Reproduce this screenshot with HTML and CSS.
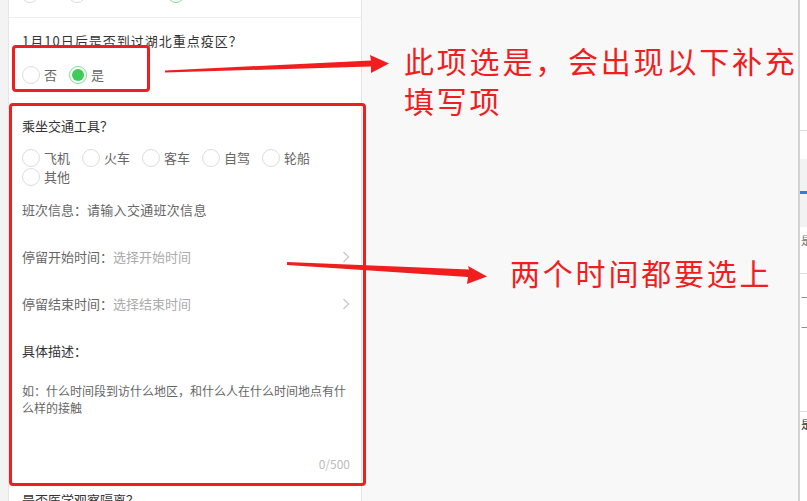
FILE: index.html
```html
<!DOCTYPE html>
<html lang="zh-CN">
<head>
    <meta charset="UTF-8">
    <meta name="viewport" content="width=device-width, initial-scale=1.0">
    <title>健康信息登记</title>
    <link rel="stylesheet" href="styles.css">
</head>
<body>
    <div class="page">
        <div class="gutter"></div>
        <div class="form">
            <div class="prev">
                <div class="radios radios-prev">
                    <span class="dot"></span>
                    <span class="dot"></span>
                    <span class="dot on"></span>
                </div>
            </div>

            <div class="section section-visit">
                <div class="q q-visit">1月10日后是否到过湖北重点疫区？</div>
                <div class="radios">
                    <label class="radio"><span class="dot"></span>否</label>
                    <label class="radio"><span class="dot on"></span>是</label>
                </div>
            </div>

            <div class="section section-travel">
                <div class="q">乘坐交通工具？</div>
                <div class="radios options">
                    <label class="radio"><span class="dot"></span>飞机</label>
                    <label class="radio"><span class="dot"></span>火车</label>
                    <label class="radio"><span class="dot"></span>客车</label>
                    <label class="radio"><span class="dot"></span>自驾</label>
                    <label class="radio"><span class="dot"></span>轮船</label>
                    <label class="radio"><span class="dot"></span>其他</label>
                </div>
                <div class="row">
                    <span class="label">班次信息：</span><span class="input">请输入交通班次信息</span>
                </div>
                <div class="row">
                    <span class="label">停留开始时间：</span><span class="hint">选择开始时间</span>
                    <svg class="chev" width="8" height="12" viewBox="0 0 8 12"><polyline points="1.5,1 6.5,6 1.5,11" fill="none" stroke="#c8c8c8" stroke-width="1.3"/></svg>
                </div>
                <div class="row">
                    <span class="label">停留结束时间：</span><span class="hint">选择结束时间</span>
                    <svg class="chev" width="8" height="12" viewBox="0 0 8 12"><polyline points="1.5,1 6.5,6 1.5,11" fill="none" stroke="#c8c8c8" stroke-width="1.3"/></svg>
                </div>
                <div class="row row-title">具体描述：</div>
                <div class="textarea">
                    <p class="placeholder">如：什么时间段到访什么地区，和什么人在什么时间地点有什么样的接触</p>
                    <div class="count">0/500</div>
                </div>
            </div>

            <div class="section section-next">
                <div class="q">是否医学观察隔离？</div>
            </div>
        </div>
        <div class="blank"></div>
        <div class="side">
            <div class="side-line s1"></div>
            <div class="side-band"><div class="side-blue"></div></div>
            <div class="side-text t1">是</div>
            <div class="side-line s2"></div>
            <div class="side-text t2">—</div>
            <div class="side-text t3">—</div>
            <div class="side-line s3"></div>
            <div class="side-text t4">是</div>
        </div>
    </div>

    <!-- annotations drawn on top of the screenshot -->
    <svg class="arrows" width="807" height="501" viewBox="0 0 807 501">
        <polygon points="165,70.5 371,60.5 370,55 389,63.5 371,73 371,66.5 165,72.5" fill="#f01e1e"/>
        <polygon points="287,262 469,269.5 468,266 487,276.5 467,284 468,277 287,265" fill="#f01e1e"/>
    </svg>
    <div class="mark mark-yes"></div>
    <div class="mark mark-travel"></div>
    <p class="note note-yes">此项选是，会出现以下补充<br>填写项</p>
    <p class="note note-time">两个时间都要选上</p>
</body>
</html>
```

FILE: styles.css
```css
body {
    margin: 0;
    width: 807px;
    height: 501px;
    overflow: hidden;
    position: relative;
    background-color: #f8f8f8;
    font-family: "Noto Sans CJK SC", "Noto Sans", sans-serif;
    font-size: 13px;
    color: #333;
}
.page {
    display: flex;
    height: 501px;
}
.gutter {
    width: 8px;
    background-color: #f3f3f3;
    border-right: 1px solid #e6e6e6;
}
.form {
    width: 352px;
    background-color: #fff;
    border-right: 1px solid #e4e4e4;
    overflow: hidden;
}
.blank {
    flex: 1;
}

/* form parts */
.prev {
    height: 17px;
    border-bottom: 1px solid #eee;
    overflow: hidden;
}
.radios-prev {
    margin-top: -15px;
    padding-left: 12px;
    gap: 29px;
}
.radios-prev .dot:last-child {
    margin-left: 52px;
}
.section {
    padding: 0 11px 0 13px;
}
.section-visit {
    padding-top: 13px;
    padding-bottom: 16px;
}
.section-travel {
    padding-top: 16px;
    padding-bottom: 12px;
}
.section-next {
    border-top: 1px solid #eee;
    padding-top: 5px;
}
.q {
    line-height: 20px;
    color: #333;
}
.q-visit {
    letter-spacing: 1px;
}
.radios {
    display: flex;
    flex-wrap: wrap;
    row-gap: 1px;
}
.section-visit .radios {
    margin-top: 15px;
}
.options {
    margin-top: 13px;
}
.radio {
    display: flex;
    align-items: center;
    gap: 4px;
    height: 18px;
    line-height: 18px;
    margin-right: 12px;
    color: #666;
}
.dot {
    width: 16px;
    height: 16px;
    border: 1px solid #ddd;
    border-radius: 50%;
    background-color: #fff;
    position: relative;
    flex: none;
}
.dot.on {
    border-color: #7ee08f;
}
.dot.on::after {
    content: "";
    position: absolute;
    left: 2px;
    top: 2px;
    width: 12px;
    height: 12px;
    border-radius: 50%;
    background-color: #3dcc5a;
}
.row {
    height: 47px;
    display: flex;
    align-items: center;
    color: #666;
}
.hint {
    color: #aaa;
}
.input {
    color: #666;
    letter-spacing: 0.3px;
}
.chev {
    margin-left: auto;
    margin-right: 0;
}
.row-title {
    color: #333;
}
.textarea {
    padding-top: 8px;
}
.placeholder {
    margin: 0;
    font-size: 12px;
    line-height: 17px;
    color: #666;
}
.count {
    margin-top: 40px;
    text-align: right;
    font-size: 12px;
    line-height: 16px;
    color: #bbb;
}

/* right edge of the next window */
.side {
    width: 7px;
    border-left: 2px solid #d2d2d2;
    background-color: #fff;
    position: relative;
    overflow: hidden;
}
.side-line {
    position: absolute;
    left: 0;
    right: 0;
    height: 1px;
    background-color: #ddd;
}
.s1 { top: 130px; }
.s2 { top: 273px; }
.s3 { top: 411px; }
.side-band {
    position: absolute;
    top: 159px;
    left: 0;
    right: 0;
    height: 68px;
    background-color: #f2f2f2;
}
.side-blue {
    margin-top: 32px;
    height: 3px;
    background-color: #2d7ddb;
}
.side-text {
    position: absolute;
    left: 1px;
    font-size: 11px;
    line-height: 12px;
    color: #777;
}
.t1 { top: 234px; }
.t2 { top: 290px; }
.t3 { top: 320px; }
.t4 { top: 418px; color: #333; }

/* annotations */
.arrows {
    position: absolute;
    left: 0;
    top: 0;
    pointer-events: none;
}
.mark {
    position: absolute;
    border: 3px solid #f01e1e;
    border-radius: 4px;
    box-sizing: border-box;
}
.mark-yes {
    left: 12px;
    top: 45px;
    width: 138px;
    height: 47px;
}
.mark-travel {
    left: 9px;
    top: 103px;
    width: 357px;
    height: 383px;
}
.note {
    position: absolute;
    margin: 0;
    font-size: 30px;
    letter-spacing: 2.8px;
    line-height: 40px;
    color: #f01e1e;
    white-space: nowrap;
}
.note-yes {
    left: 404px;
    top: 40px;
}
.note-time {
    left: 510px;
    top: 252px;
}
```
